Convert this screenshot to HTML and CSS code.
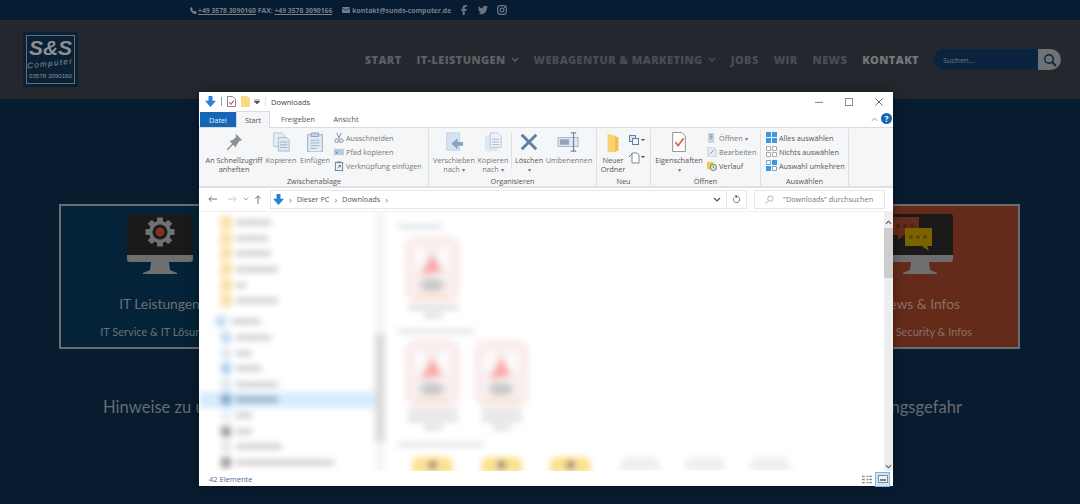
FILE: index.html
```html
<!DOCTYPE html>
<html lang="de">
<head>
<meta charset="utf-8">
<title>S&amp;S Computer</title>
<link rel="stylesheet" href="styles.css">
</head>
<body>
<svg class="defs" width="0" height="0" aria-hidden="true">
  <symbol id="dl" viewBox="0 0 14 14"><path d="M4.500 0h5v6H14L7 14 0 6h4.500z" fill="#2a7fd6"/></symbol>
  <symbol id="mon" viewBox="0 0 66 60"><path d="M3 0h60a3 3 0 0 1 3 3v38H0V3a3 3 0 0 1 3-3z" fill="#1a1a1a"/><path d="M0 41h66v4a3 3 0 0 1-3 3H3a3 3 0 0 1-3-3z" fill="#6e6e6e"/><path d="M24 48h18l1 8 7 3v1H16v-1l7-3z" fill="#707070"/></symbol>
  <symbol id="pdf" viewBox="0 0 53 64"><rect x="1" y="1" width="51" height="62" rx="8" fill="#f8efef" stroke="#fbdcdc" stroke-width="2"/><ellipse cx="14" cy="20" rx="6" ry="11" fill="#fdfafa"/><ellipse cx="38" cy="20" rx="6" ry="11" fill="#fdfafa"/><path d="M26 17l10 17-21 4z" fill="#f9a8a8"/><ellipse cx="26" cy="48" rx="12" ry="6.500" fill="#c8c8c8"/><rect x="8" y="58" width="37" height="4" fill="#f9e6d2"/></symbol>
</svg>

<header class="topbar">
  <svg class="ico-s" viewBox="0 0 10 10"><path d="M2 0l2 2.500-1 1.500 2.500 2.500L7 5.500 10 8 8 10C4 10 0 5 0 2z" fill="#7b7f83"/></svg>
  <span class="contact"><a class="tel">+49 3578 3090160</a> FAX: <a class="tel">+49 3578 3090166</a></span>
  <svg class="ico-mail" viewBox="0 0 9 7"><path d="M0 0h9v7H0z" fill="#7b7f83"/><path d="M0 1l4.500 3L9 1" fill="none" stroke="#061c33" stroke-width=".8"/></svg>
  <span class="mail">kontakt@sunds-computer.de</span>
  <svg class="social first" viewBox="0 0 10 14"><path d="M3 14V8H1V5.500h2V3.500C3 1.200 4.500 0 6.500 0H9v2.500H7.300c-.9 0-1.300.4-1.300 1.200v1.800h3L8.600 8H6v6z" fill="#6f7478"/></svg>
  <svg class="social" viewBox="0 0 14 12"><path d="M14 1.500l-1.500 1.300C12.500 8 9 12 4.500 12 2.800 12 1.300 11.500 0 10.700c1.600.2 3.100-.3 4.200-1.200-1.300 0-2.300-.9-2.700-2h1.200C1.400 7 .5 5.800.5 4.300c.4.200.8.400 1.300.4C.5 3.800.2 2 .9.800 2.400 2.500 4.500 3.600 6.900 3.700 6.500 1.800 8 .2 9.800.2c.9 0 1.600.4 2.100.9L13.700.5 12.800 2z" fill="#6f7478"/></svg>
  <svg class="social" viewBox="0 0 12 12"><rect x=".8" y=".8" width="10.400" height="10.400" rx="3" fill="none" stroke="#6f7478" stroke-width="1.500"/><circle cx="6" cy="6" r="2.300" fill="none" stroke="#6f7478" stroke-width="1.400"/><circle cx="9" cy="3" r=".8" fill="#6f7478"/></svg>
</header>

<nav class="nav">
  <div class="logo">
    <div class="logo-inner">
      <span class="logo-ss">S&amp;S</span>
      <span class="logo-c">Computer</span>
      <span class="logo-t">03578 3090160</span>
    </div>
  </div>
  <ul class="menu">
    <li>START</li>
    <li class="has-sub">IT-LEISTUNGEN<svg class="chev" viewBox="0 0 8 5"><path d="M1 1l3 3 3-3" fill="none" stroke="#5d6064" stroke-width="1.300"/></svg></li>
    <li class="dim has-sub">WEBAGENTUR &amp; MARKETING<svg class="chev" viewBox="0 0 8 5"><path d="M1 1l3 3 3-3" fill="none" stroke="#4a4d52" stroke-width="1.300"/></svg></li>
    <li class="dim">JOBS</li>
    <li class="dim">WIR</li>
    <li class="dim">NEWS</li>
    <li class="bright">KONTAKT</li>
  </ul>
  <div class="search">
    <span class="search-txt">Suchen...</span>
    <span class="search-btn"><svg viewBox="0 0 14 14" width="14" height="14"><circle cx="6" cy="6" r="4.300" fill="none" stroke="#0a2440" stroke-width="1.500"/><path d="M9 9l4 4" stroke="#0a2440" stroke-width="1.800"/></svg></span>
  </div>
</nav>

<main class="page">
  <div class="cards">
    <section class="card card-blue">
      <svg class="monitor" viewBox="0 0 66 60"><use href="#mon"/><g transform="translate(33 18)"><circle r="11" fill="#6f7173"/><g fill="#6f7173"><rect x="-3" y="-14.500" width="6" height="29"/><rect x="-3" y="-14.500" width="6" height="29" transform="rotate(45)"/><rect x="-3" y="-14.500" width="6" height="29" transform="rotate(90)"/><rect x="-3" y="-14.500" width="6" height="29" transform="rotate(135)"/></g><circle r="7.500" fill="#1a1a1a"/><circle r="4.500" fill="#7f3320"/></g></svg>
      <h3 class="card-title">IT Leistungen</h3>
      <p class="card-sub">IT Service &amp; IT Lösungen</p>
    </section>
    <section class="card card-red">
      <svg class="monitor" viewBox="0 0 66 60"><use href="#mon"/><path d="M5 3h27v18H17l-6 5v-5H5z" fill="#662b1b"/><path d="M18 14h27v18h-5l2 5-7-5H18z" fill="#7a6400"/><g fill="#4f2014"><circle cx="11" cy="12" r="2"/><circle cx="18" cy="12" r="2"/><circle cx="25" cy="12" r="2"/></g><g fill="#5a4c06"><circle cx="24" cy="23" r="2"/><circle cx="31" cy="23" r="2"/><circle cx="38" cy="23" r="2"/></g></svg>
      <h3 class="card-title">News &amp; Infos</h3>
      <p class="card-sub card-sub-end">Security &amp; Infos</p>
    </section>
  </div>
  <div class="notice"><span>Hinweise zu u</span><span>ngsgefahr</span></div>
</main>

<div class="window">
  <div class="titlebar">
    <svg class="tb-ico"><use href="#dl"/></svg>
    <i class="vsep"></i>
    <svg class="tb-doc" viewBox="0 0 10 12"><path d="M.5.500h6l3 3v8H.5z" fill="#fff" stroke="#777"/><path d="M2.500 7l2 2 3-4" fill="none" stroke="#e04a3a" stroke-width="1.200"/></svg>
    <svg class="tb-folder" viewBox="0 0 10 12"><path d="M0 0h6l4 2v10H0z" fill="#fbd97f"/></svg>
    <svg class="tb-drop" viewBox="0 0 7 6"><path d="M0 0h7M0 2.500h7L3.500 6z" stroke="#555" stroke-width=".8" fill="#555"/></svg>
    <i class="vsep vsep-light"></i>
    <span class="tb-title">Downloads</span>
    <div class="controls">
      <svg viewBox="0 0 10 10" class="ctl"><path d="M0 5.500h10" stroke="#666"/></svg>
      <svg viewBox="0 0 10 10" class="ctl"><rect x=".5" y=".5" width="9" height="9" fill="none" stroke="#777"/></svg>
      <svg viewBox="0 0 10 10" class="ctl"><path d="M.5.500l9 9M9.500.500l-9 9" stroke="#444"/></svg>
    </div>
  </div>
  <div class="tabs">
    <span class="tab tab-file">Datei</span>
    <span class="tab tab-active">Start</span>
    <span class="tab tab-free">Freigeben</span>
    <span class="tab tab-view">Ansicht</span>
    <svg class="caret" viewBox="0 0 8 5"><path d="M1 4l3-3 3 3" fill="none" stroke="#888"/></svg>
    <span class="help">?</span>
  </div>
  <div class="ribbon">
    <div class="group g1">
      <div class="tools">
        <div class="big w58 on"><svg class="bi" viewBox="0 0 22 22"><path d="M13 2l7 7-3 1-3 4-1 3-3-3-6 6-1-1 6-6-3-3 3-1 4-3z" fill="#8a8f96"/></svg><span>An Schnellzugriff<br>anheften</span></div>
        <div class="big w32"><svg class="bi" viewBox="0 0 22 22"><path d="M3 1h9l3 3v12H3z" fill="#e6edf5" stroke="#b4c3d6"/><path d="M8 6h9l3 3v12H8z" fill="#dbe6f2" stroke="#a9bcd2"/><path d="M10 11h8M10 14h8M10 17h8" stroke="#9db0c6"/></svg><span>Kopieren</span></div>
        <div class="big w32"><svg class="bi" viewBox="0 0 22 22"><rect x="3" y="3" width="16" height="19" fill="#e2ecf6" stroke="#8ea6c0"/><rect x="7" y="1" width="8" height="4" fill="#c4d0dc" stroke="#8ea6c0"/><path d="M6 9h10M6 12h10M6 15h10M6 18h7" stroke="#9cb1c7"/></svg><span>Einfügen</span></div>
        <div class="list list-off">
          <div class="small"><svg viewBox="0 0 11 11"><path d="M3 0l3 6M8 0L5 6" stroke="#7a8794" fill="none"/><circle cx="3" cy="8.500" r="2" fill="none" stroke="#6c88aa"/><circle cx="8" cy="8.500" r="2" fill="none" stroke="#6c88aa"/></svg><span>Ausschneiden</span></div>
          <div class="small"><svg viewBox="0 0 11 11"><rect y="2" width="11" height="7" fill="#b9cbe0"/><path d="M2 5l1 2 1-2" stroke="#567" fill="none" stroke-width=".7"/></svg><span>Pfad kopieren</span></div>
          <div class="small"><svg viewBox="0 0 11 11"><rect x="1.500" y="1.500" width="8" height="9" fill="#eef3f8" stroke="#5d7fa6"/><rect x="3.500" y=".5" width="4" height="2" fill="#888"/><path d="M4 8l3-3M5 5h2v2" stroke="#33567e" fill="none" stroke-width=".8"/></svg><span>Verknüpfung einfügen</span></div>
        </div>
      </div>
      <div class="glabel">Zwischenablage</div>
    </div>
    <div class="group g2">
      <div class="tools">
        <div class="big w42"><svg class="bi" viewBox="0 0 22 22"><rect x="3" y="1" width="14" height="19" fill="#d5e3f3" stroke="#bfd1e6"/><path d="M21 11h-6V7l-7 6 7 6v-4h6z" fill="#8aa3bf"/></svg><span>Verschieben<br>nach <em class="tri">▾</em></span></div>
        <div class="big w32"><svg class="bi" viewBox="0 0 22 22"><rect x="2" y="4" width="14" height="17" fill="#dde8f5"/><path d="M8 1h8l4 4v12H8z" fill="#eef3f9" stroke="#b4c3d6"/><path d="M10 8h8M10 11h8M10 14h8" stroke="#a0b4ca"/></svg><span>Kopieren<br>nach <em class="tri">▾</em></span></div>
        <i class="isep"></i>
        <div class="big w30 on"><svg class="bi" viewBox="0 0 22 22"><path d="M3 3l16 16M19 3L3 19" stroke="#5f7fa6" stroke-width="3.200"/></svg><span>Löschen<br><em class="tri">▾</em></span></div>
        <div class="big w46"><svg class="bi bi-w" viewBox="0 0 26 22"><rect x="1" y="6" width="22" height="10" fill="#dde8f3" stroke="#9db2c9"/><rect x="3" y="8" width="10" height="6" fill="#8fa4ba"/><path d="M15 1h6M18 1v20M15 21h6" stroke="#6d86a3" fill="none" stroke-width="1.300"/></svg><span>Umbenennen</span></div>
      </div>
      <div class="glabel">Organisieren</div>
    </div>
    <div class="group g3">
      <div class="tools">
        <div class="big w28 on"><svg class="bi" viewBox="0 0 22 22"><path d="M5 2l8 2v18H5z" fill="#fad272"/><path d="M13 4l4 2v14l-4 2z" fill="#f2bd4a"/></svg><span>Neuer<br>Ordner</span></div>
        <div class="minis">
          <svg viewBox="0 0 16 12"><rect x=".5" y=".5" width="6" height="6" fill="#dbe6f2" stroke="#5f7fa6"/><rect x="3.500" y="3.500" width="6" height="6" fill="#eef3f8" stroke="#5f7fa6"/><path d="M12 4h4l-2 2z" fill="#444"/></svg>
          <svg viewBox="0 0 16 12"><path d="M3 1h5l2 2v8H3z" fill="#fff" stroke="#888"/><path d="M0 5l3-3" stroke="#2a7fd6"/><path d="M12 4h4l-2 2z" fill="#444"/></svg>
        </div>
      </div>
      <div class="glabel">Neu</div>
    </div>
    <div class="group g4">
      <div class="tools">
        <div class="big w50 on"><svg class="bi" viewBox="0 0 22 22"><path d="M4 .5h10l4 4v17H4z" fill="#fff" stroke="#8a8a8a"/><path d="M7 11l3 4 6-8" fill="none" stroke="#e2573c" stroke-width="1.800"/></svg><span>Eigenschaften<br><em class="tri">▾</em></span></div>
        <div class="list">
          <div class="small small-off"><svg viewBox="0 0 11 11"><rect x="1" width="7" height="11" fill="#c9d6e4"/><path d="M3 2h3M3 4h3M3 6h3" stroke="#7088a2"/></svg><span>Öffnen <em class="tri">▾</em></span></div>
          <div class="small small-off"><svg viewBox="0 0 11 11"><path d="M1 0h6l3 3v8H1z" fill="#e6edf5" stroke="#a9bcd2" stroke-width=".7"/><path d="M3 8l5-5" stroke="#7f97b2"/></svg><span>Bearbeiten</span></div>
          <div class="small"><svg viewBox="0 0 11 11"><path d="M0 1h7v8H0z" fill="#f2c94e"/><circle cx="7" cy="7" r="3.500" fill="#dfe6dc" stroke="#5f7f55"/><path d="M7 5v2l1.500 1" stroke="#444" fill="none" stroke-width=".7"/></svg><span>Verlauf</span></div>
        </div>
      </div>
      <div class="glabel">Öffnen</div>
    </div>
    <div class="group g5">
      <div class="tools">
        <div class="list list-sel">
          <div class="small"><svg viewBox="0 0 11 11"><path d="M0 0h5v5H0zM6 0h5v5H6zM0 6h5v5H0zM6 6h5v5H6z" fill="#3f97dd"/></svg><span>Alles auswählen</span></div>
          <div class="small"><svg viewBox="0 0 11 11"><path d="M.5.500h4v4h-4zM6.500.500h4v4h-4zM.5 6.500h4v4h-4zM6.500 6.500h4v4h-4z" fill="#fff" stroke="#aaa"/></svg><span>Nichts auswählen</span></div>
          <div class="small"><svg viewBox="0 0 11 11"><path d="M.5.500h4v4h-4zM6.500 6.500h4v4h-4z" fill="#fff" stroke="#6aa5d8"/><path d="M6 0h5v5H6zM0 6h5v5H0z" fill="#3f97dd"/></svg><span>Auswahl umkehren</span></div>
        </div>
      </div>
      <div class="glabel">Auswählen</div>
    </div>
  </div>
  <div class="addressbar">
    <div class="navbtns">
      <svg viewBox="0 0 10 8" class="nb"><path d="M10 4H1M4 1L1 4l3 3" fill="none" stroke="#666"/></svg>
      <svg viewBox="0 0 10 8" class="nb nb-off"><path d="M0 4h9M6 1l3 3-3 3" fill="none" stroke="#c4c4c4"/></svg>
      <svg viewBox="0 0 7 4" class="nb-d"><path d="M1 .5l2.500 2.500L6 .5" fill="none" stroke="#888"/></svg>
      <svg viewBox="0 0 8 10" class="nb-u"><path d="M4 10V1M1 4l3-3 3 3" fill="none" stroke="#666"/></svg>
    </div>
    <div class="addr">
      <svg class="addr-ico"><use href="#dl"/></svg>
      <span class="crumb-sep">›</span><span>Dieser PC</span><span class="crumb-sep">›</span><span>Downloads</span><span class="crumb-sep">›</span>
      <svg viewBox="0 0 8 5" class="addr-drop"><path d="M1 1l3 3 3-3" fill="none" stroke="#555" stroke-width="1.200"/></svg>
    </div>
    <div class="refresh"><svg viewBox="0 0 10 10" width="9" height="9"><path d="M5 1.500a3.500 3.500 0 1 1-3 1.800M5 0v3L3 1.500z" fill="none" stroke="#666"/></svg></div>
    <div class="searchbox"><svg viewBox="0 0 10 10" width="9" height="9"><circle cx="6" cy="4" r="3" fill="none" stroke="#aaa"/><path d="M4 6.500L.5 9.500" stroke="#aaa"/></svg><span>"Downloads" durchsuchen</span></div>
  </div>
  <div class="content">
    <div class="tree">
      <div class="tree-in">
        <div class="row"><b class="dot folder"></b><b class="bar w35"></b></div>
        <div class="row"><b class="dot folder"></b><b class="bar w32b"></b></div>
        <div class="row"><b class="dot folder"></b><b class="bar w35"></b></div>
        <div class="row"><b class="dot folder"></b><b class="bar w42b"></b></div>
        <div class="row"><b class="dot folder"></b><b class="bar w10"></b></div>
        <div class="row"><b class="dot folder"></b><b class="bar w42b"></b></div>
        <div class="row row-pc"><b class="dot blue"></b><b class="bar w30b"></b></div>
        <div class="row"><b class="dot blue"></b><b class="bar w35"></b></div>
        <div class="row"><b class="dot pale"></b><b class="bar w16"></b></div>
        <div class="row"><b class="dot blue2"></b><b class="bar w25"></b></div>
        <div class="row"><b class="dot pale"></b><b class="bar w42b"></b></div>
        <div class="row row-sel"><b class="dot blue3"></b><b class="bar w42b"></b></div>
        <div class="row"><b class="dot pale2"></b><b class="bar w16"></b></div>
        <div class="row"><b class="dot grey"></b><b class="bar w16"></b></div>
        <div class="row"><b class="dot pale"></b><b class="bar w46b"></b></div>
        <div class="row"><b class="dot grey"></b><b class="bar w100"></b></div>
      </div>
      <div class="tree-scroll"><b class="tree-thumb"></b></div>
    </div>
    <div class="files">
      <div class="files-in">
        <div class="ghead w44"></div>
        <div class="tiles t1">
          <div class="tile"><svg class="pdf"><use href="#pdf"/></svg><b class="cap c1"></b><b class="cap c2"></b></div>
        </div>
        <div class="ghead w75"></div>
        <div class="tiles t2">
          <div class="tile"><svg class="pdf"><use href="#pdf"/></svg><b class="cap c1"></b><b class="cap c1"></b><b class="cap c2"></b></div>
          <div class="tile"><svg class="pdf"><use href="#pdf"/></svg><b class="cap c3"></b><b class="cap c3"></b><b class="cap c2"></b></div>
        </div>
        <div class="ghead w85"></div>
        <div class="tiles t3">
          <div class="tile"><b class="yfolder"></b></div>
          <div class="tile"><b class="yfolder"></b></div>
          <div class="tile"><b class="yfolder"></b></div>
          <div class="tile tile-g"><b class="gfile"></b></div>
          <div class="tile tile-g"><b class="gfile"></b></div>
          <div class="tile tile-g"><b class="gfile"></b></div>
        </div>
      </div>
    </div>
    <div class="vscroll">
      <svg viewBox="0 0 8 5" class="arrow"><path d="M1 4l3-3 3 3" fill="none" stroke="#555" stroke-width="1.200"/></svg>
      <b class="thumb"></b>
      <svg viewBox="0 0 8 5" class="arrow arrow-down"><path d="M1 1l3 3 3-3" fill="none" stroke="#555" stroke-width="1.200"/></svg>
    </div>
  </div>
  <div class="status">
    <span class="count">42 Elemente</span>
    <svg class="view-list" viewBox="0 0 11 9"><path d="M0 1h3M5 1h2M8 1h3M0 4.500h3M5 4.500h2M8 4.500h3M0 8h3M5 8h2M8 8h3" stroke="#8a8a8a" stroke-width="1.400"/></svg>
    <span class="view-sel"><svg viewBox="0 0 10 8" width="10" height="8"><rect x=".5" y=".5" width="9" height="7" fill="#eef3f8" stroke="#8a8a8a"/><path d="M2 5h6" stroke="#45607e" stroke-width="1.500"/></svg></span>
  </div>
</div>
</body>
</html>
```

FILE: styles.css
```css
* { box-sizing: border-box; }
html, body { margin: 0; padding: 0; }
body {
  width: 1080px;
  height: 504px;
  overflow: hidden;
  position: relative;
  background: #081c30;
  font-family: "Open Sans", "Noto Sans", sans-serif;
}
.defs { position: absolute; }

/* top bar */
.topbar {
  height: 20px;
  background: #061c33;
  display: flex;
  align-items: center;
  padding-left: 190px;
  color: #7b7f83;
  font: 700 6.8px "Open Sans", sans-serif;
}
.ico-s { width: 7px; height: 7px; margin-right: 1px; }
.tel { text-decoration: underline; }
.contact { white-space: pre; }
.ico-mail { width: 8px; height: 6px; margin-left: 10px; margin-right: 2px; }
.social { height: 10px; width: 10px; margin-left: 9px; }
.social.first { margin-left: 8px; }

/* nav */
.nav {
  height: 79px;
  background: #24272e;
  display: flex;
  align-items: center;
  padding: 0 19px 0 23px;
}
.logo {
  width: 55px;
  height: 55px;
  background: #0a2035;
  padding: 3px;
  border-radius: 1px;
}
.logo-inner {
  height: 100%;
  border: 1px solid #6a7078;
  display: flex;
  flex-direction: column;
  align-items: center;
  color: #8d9093;
  font-family: "Liberation Sans", sans-serif;
}
.logo-ss { font: italic 700 21px/20px "Liberation Sans", sans-serif; margin-top: 2px; white-space: nowrap; }
.logo-c { font-size: 8px; font-style: italic; letter-spacing: 1.4px; line-height: 9px; transform: rotate(-6deg); margin-top: 1px; }
.logo-t { font-size: 6.200px; line-height: 8px; margin-top: 4px; white-space: nowrap; }
.menu {
  list-style: none;
  margin: 0 0 0 auto;
  padding: 0;
  display: flex;
  gap: 15px;
  font: 800 11px "Open Sans", sans-serif;
  letter-spacing: .4px;
  color: #5d6064;
}
.menu li { white-space: nowrap; display: flex; align-items: center; }
.menu .dim { color: #4a4d52; }
.menu .bright { color: #74777b; }
.chev { width: 8px; height: 5px; margin-left: 5px; }
.search {
  width: 127px;
  height: 21px;
  margin-left: 15px;
  background: #0a2440;
  border-radius: 11px;
  display: flex;
  align-items: center;
  overflow: hidden;
}
.search-txt { font-size: 7.5px; color: #737a82; margin-left: 9px; flex: 1; }
.search-btn { width: 23px; height: 21px; background: #6f7173; display: flex; align-items: center; justify-content: center; }

/* page behind the window */
.page { padding: 105px 60px 0 59px; }
.cards { display: flex; justify-content: space-between; }
.card {
  width: 201px;
  height: 145px;
  border: 2px solid #6b6e70;
  display: flex;
  flex-direction: column;
  align-items: center;
  padding-top: 8px;
  color: #6c7175;
}
.card-blue { background: #052338; }
.card-red { background: #642b1a; color: #8b7066; }
.monitor { width: 66px; height: 60px; }
.card-title { font: 400 13.8px/18px Lato, "Open Sans", sans-serif; margin: 21px 0 0; white-space: nowrap; }
.card-sub { font: 400 11px/14px Lato, "Open Sans", sans-serif; margin: 12px 0 0; white-space: nowrap; }
.card-sub-end { align-self: flex-end; padding-right: 46px; }
.notice {
  display: flex;
  justify-content: space-between;
  margin: 46px 58px 0 44px;
  font: 400 16.600px/24px Lato, "Open Sans", sans-serif;
  color: #656b71;
}

/* explorer window */
.window {
  position: absolute;
  left: 199px;
  top: 92px;
  width: 694px;
  height: 394px;
  background: #fff;
  display: flex;
  flex-direction: column;
  box-shadow: 0 0 12px rgba(0, 0, 0, .35);
  font: 400 7.3px "Open Sans", sans-serif;
  color: #555;
}
.titlebar { height: 19px; display: flex; align-items: center; padding-left: 6px; flex: none; }
.tb-ico { width: 11px; height: 11px; }
.vsep { width: 1px; height: 9px; background: #999; margin: 0 5px; }
.vsep-light { background: #ddd; }
.tb-doc { width: 9px; height: 11px; margin-right: 5px; }
.tb-folder { width: 9px; height: 11px; margin-right: 4px; }
.tb-drop { width: 6px; height: 5px; }
.tb-title { font-size: 7.5px; color: #444; }
.controls { margin-left: auto; display: flex; gap: 22px; padding-right: 10px; }
.ctl { width: 8px; height: 8px; }
.tabs { height: 17px; display: flex; align-items: flex-end; padding-left: 1px; flex: none; border-bottom: 1px solid #dadbdc; position: relative; }
.tab { height: 16px; display: flex; align-items: center; justify-content: center; }
.tab-file { width: 36px; background: #1566b6; color: #e8f0f8; height: 15px; }
.tab-active { width: 34px; border: 1px solid #dadbdc; border-bottom: 0; background: #f5f6f7; margin-bottom: -1px; height: 17px; }
.tab-free { width: 48px; margin-left: 4px; }
.tab-view { width: 36px; margin-left: 6px; }
.caret { position: absolute; right: 15px; top: 6px; width: 7px; height: 5px; }
.help {
  position: absolute; right: 1px; top: 2px;
  width: 11px; height: 11px; border-radius: 50%;
  background: #1566b6; color: #fff; font: 700 8.500px/11px "Open Sans", sans-serif; text-align: center;
}
.ribbon { height: 60px; flex: none; background: #f5f6f7; display: flex; border-bottom: 2px solid #dfe0e1; padding-left: 1px; }
.group { display: flex; flex-direction: column; border-right: 1px solid #dfe0e1; margin-top: 1px; }
.g1 { width: 229px; }
.g2 { width: 168px; }
.g3 { width: 54px; }
.g4 { width: 110px; }
.g5 { width: 88px; }
.tools { flex: 1; display: flex; padding: 3px 0 0 5px; gap: 2px; min-height: 0; }
.g2 .tools { padding-left: 4px; }
.g3 .tools { padding-left: 2px; }
.g4 .tools { padding-left: 3px; }
.glabel { text-align: center; line-height: 10px; height: 10px; color: #555; }
.big { display: flex; flex-direction: column; align-items: center; text-align: center; line-height: 9px; white-space: nowrap; color: #777; }
.big.on { color: #555; }
.big span { margin-top: 4px; }
.bi { width: 20px; height: 20px; flex: none; }
.bi-w { width: 24px; }
.w58 { width: 58px; }
.w32 { width: 32px; }
.w42 { width: 42px; }
.w30 { width: 30px; }
.w46 { width: 46px; }
.w28 { width: 28px; }
.w50 { width: 50px; }
.tri { font-style: normal; font-size: 6px; color: #777; }
.isep { width: 1px; height: 37px; background: #dfe0e1; }
.list { display: flex; flex-direction: column; gap: 3px; margin-left: 1px; }
.list-off, .small-off { color: #777; }
.list-sel { margin-left: 0; }
.small { display: flex; align-items: center; gap: 2px; height: 11px; white-space: nowrap; }
.small svg { width: 10px; height: 10px; flex: none; }
.list-sel .small svg { width: 11px; height: 11px; }
.minis { display: flex; flex-direction: column; gap: 5px; padding-top: 3px; }
.minis svg { width: 16px; height: 12px; }

.addressbar { height: 24px; flex: none; display: flex; align-items: center; padding: 0 8px 1px 0; border-bottom: 1px solid #f0f0f0; }
.navbtns { width: 71px; display: flex; align-items: center; padding-left: 9px; }
.nb { width: 9px; height: 8px; }
.nb-off { margin-left: 11px; }
.nb-d { width: 6px; height: 4px; margin-left: 6px; }
.nb-u { width: 8px; height: 9px; margin-left: 5px; }
.addr { width: 457px; height: 19px; border: 1px solid #e6e6e6; display: flex; align-items: center; gap: 5px; padding-left: 1px; }
.addr-ico { width: 11px; height: 11px; margin-left: 1px; }
.crumb-sep { color: #777; font-size: 9px; }
.addr-drop { width: 8px; height: 5px; margin-left: auto; margin-right: 5px; }
.refresh { width: 20px; height: 19px; border: 1px solid #e6e6e6; border-left: 0; display: flex; align-items: center; justify-content: center; }
.searchbox { width: 131px; height: 19px; margin-left: 7px; border: 1px solid #e6e6e6; display: flex; align-items: center; gap: 9px; padding-left: 10px; color: #777; }

/* blurred area */
.content { height: 259px; flex: none; display: flex; overflow: hidden; }
.tree { width: 186px; flex: none; display: flex; filter: blur(3px); }
.tree-in { width: 176px; padding-top: 3px; }
.row { height: 15.600px; display: flex; align-items: center; padding-left: 22px; gap: 5px; }
.row-pc { margin-top: 5.500px; padding-left: 17px; }
.row-sel { background: #d6ecfb; }
.dot { width: 10px; height: 11px; border-radius: 3px; flex: none; }
.folder { background: #fbdca6; box-shadow: 0 0 0 2px #fdf3cf; }
.blue { background: #bcd8f2; }
.blue2 { background: #a8ccf0; }
.blue3 { background: #7fa6cc; }
.pale { background: #dfe6ee; }
.pale2 { background: #e7f0f9; }
.grey { background: #9a9a9a; }
.bar { height: 5px; background: #c8c8c8; }
.row-sel .bar { background: #8fa8bd; }
.w10 { width: 10px; }
.w16 { width: 16px; }
.w25 { width: 25px; }
.w30b { width: 30px; }
.w32b { width: 32px; }
.w35 { width: 35px; }
.w42b { width: 42px; }
.w46b { width: 46px; }
.w100 { width: 98px; }
.tree-scroll { width: 10px; background: #f4f4f4; padding-top: 122px; }
.tree-thumb { display: block; height: 107px; background: #dadada; }
.files { flex: 1; overflow: hidden; }
.files-in { filter: blur(3px); padding: 12px 0 0 13px; height: 100%; }
.ghead { height: 5px; background: #dfe5ea; }
.w44 { width: 44px; }
.w75 { width: 75px; margin-top: 3px; }
.w85 { width: 85px; margin-top: 3px; }
.tiles { display: flex; padding-left: 8px; margin-top: 8px; gap: 16px; }
.t1 { height: 89px; }
.t2 { height: 98px; margin-top: 7px; }
.t3 { margin-top: 10px; gap: 0; }
.tile { width: 53px; display: flex; flex-direction: column; align-items: center; gap: 3px; }
.t3 .tile { width: 69px; padding-right: 16px; }
.pdf { width: 53px; height: 64px; margin-bottom: 1px; flex: none; }
.cap { display: block; height: 5px; background: #dcdcdc; }
.c1 { width: 50px; }
.c2 { width: 18px; }
.c3 { width: 40px; }
.yfolder { display: block; width: 41px; height: 16px; background: #fde08e; border-radius: 8px 8px 0 0; position: relative; }
.yfolder::after { content: ""; position: absolute; left: 17px; top: 4px; width: 7px; height: 8px; border-radius: 50%; background: #7d7d7d; }
.gfile { display: block; width: 40px; height: 14px; background: #efefef; border-radius: 8px 8px 0 0; }
.t3 .tile-g { width: 65px; padding-right: 12px; }
.vscroll { width: 9px; flex: none; background: #eee; display: flex; flex-direction: column; align-items: center; padding-top: 8px; position: relative; }
.arrow { width: 7px; height: 5px; flex: none; }
.thumb { display: block; width: 9px; height: 50px; background: #cdcdcd; margin-top: 3px; }
.arrow-down { position: absolute; bottom: 2px; left: 1px; }
.status { height: 16px; flex: none; display: flex; align-items: center; padding-left: 10px; position: relative; }
.count { font-size: 7.5px; color: #4c6f94; }
.view-list { width: 10px; height: 9px; margin-left: auto; margin-right: 3px; }
.view-sel { width: 15px; height: 15px; background: #cde6f7; border: 1px solid #7ab8ea; display: flex; align-items: center; justify-content: center; margin-right: 3px; }
```
